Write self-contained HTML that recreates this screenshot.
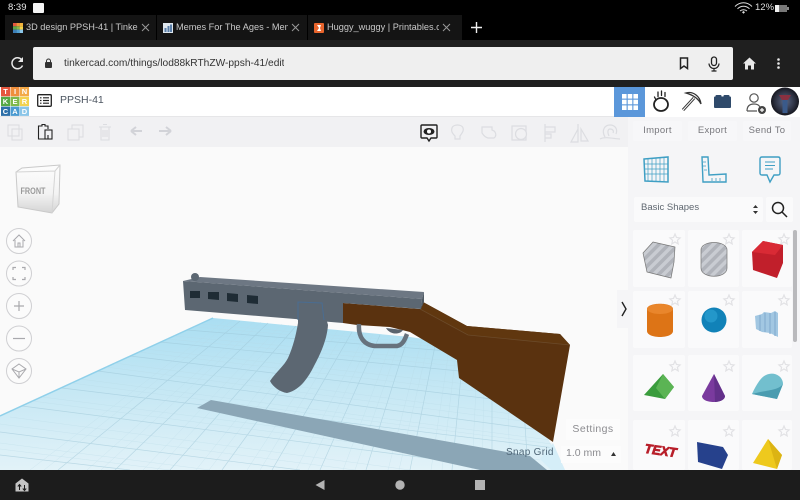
<!DOCTYPE html>
<html><head><meta charset="utf-8">
<style>
html,body{margin:0;padding:0;width:800px;height:500px;overflow:hidden;background:#000}
body{position:relative;font-family:"Liberation Sans",sans-serif}
.a{position:absolute}
.t{position:absolute;white-space:nowrap;overflow:hidden}
.tab{position:absolute;top:15px;height:25px;background:#141414}
.btn{position:absolute;top:121px;height:20px;background:#f7f7f9;color:#77777c;font-size:9.5px;letter-spacing:.3px;text-align:center;line-height:20px;border-radius:2px}
.tile{position:absolute;background:#fafafb;border-radius:2px}
</style></head><body>

<div class="a" style="left:0;top:0;width:800px;height:40px;background:#000"></div>
<div class="t" style="left:8px;top:2px;font-size:9.5px;line-height:12px;color:#e8e8e8">8:39</div>
<div class="a" style="left:33px;top:3px;width:11px;height:10px;background:#f4f4f4;border-radius:1px"></div>

<svg class="a" style="left:734px;top:2px" width="66" height="13" viewBox="0 0 66 13">
<path d="M1 4.500C6-.5 13-.5 18 4.500M3.500 6.800C7 3.400 12 3.400 15.500 6.800M6 9C8 7.400 11 7.400 13 9" stroke="#ddd" stroke-width="1" fill="none"/><path d="M8 10.200L9.500 9L11 10.200L9.500 11.700Z" fill="#ddd"/>
<rect x="41" y="3" width="12" height="7" fill="#777"/><rect x="41" y="3" width="4" height="7" fill="#eee"/><rect x="53" y="5" width="2" height="3" fill="#888"/>
</svg>
<div class="t" style="left:755px;top:2px;font-size:9.5px;line-height:12px;color:#ddd">12%</div>

<div class="tab" style="left:5px;width:151px"></div>
<div class="tab" style="left:157px;width:150px"></div>
<div class="tab" style="left:308px;width:154px"></div>

<svg class="a" style="left:13px;top:23px" width="10" height="10"><rect width="3.300" height="3.300" fill="#e5573f"/><rect x="3.300" width="3.300" height="3.300" fill="#f0923b"/><rect x="6.600" width="3.400" height="3.300" fill="#f3b33d"/><rect y="3.300" width="3.300" height="3.300" fill="#5da84a"/><rect x="3.300" y="3.300" width="3.300" height="3.300" fill="#86b84a"/><rect x="6.600" y="3.300" width="3.400" height="3.300" fill="#f2d14a"/><rect y="6.600" width="3.300" height="3.400" fill="#3d7fb8"/><rect x="3.300" y="6.600" width="3.300" height="3.400" fill="#4f9ed1"/><rect x="6.600" y="6.600" width="3.400" height="3.400" fill="#8cc6e8"/></svg>
<div class="t" style="left:26px;top:21px;width:112px;font-size:9.2px;line-height:13px;color:#c9c9c9">3D design PPSH-41 | Tinkercad</div>
<svg class="a" style="left:141px;top:23px" width="9" height="9"><path d="M1 1L8 8M8 1L1 8" stroke="#999" stroke-width="1"/></svg>

<svg class="a" style="left:163px;top:23px" width="10" height="10"><rect width="10" height="10" fill="#dfe7ee"/><rect x="1.500" y="5" width="2" height="4" fill="#5a7ea8"/><rect x="4.500" y="3" width="2" height="6" fill="#5a7ea8"/><rect x="7" y="1.500" width="2" height="7.500" fill="#5a7ea8"/></svg>
<div class="t" style="left:176px;top:21px;width:112px;font-size:9.2px;line-height:13px;color:#c9c9c9">Memes For The Ages - Memes</div>
<svg class="a" style="left:291px;top:23px" width="9" height="9"><path d="M1 1L8 8M8 1L1 8" stroke="#999" stroke-width="1"/></svg>

<svg class="a" style="left:314px;top:23px" width="10" height="10"><rect width="10" height="10" rx="1" fill="#e8642c"/><path d="M3 2H7L6 5L7 8H3L5 5Z" fill="#fff"/></svg>
<div class="t" style="left:327px;top:21px;width:112px;font-size:9.2px;line-height:13px;color:#c9c9c9">Huggy_wuggy | Printables.com</div>
<svg class="a" style="left:442px;top:23px" width="9" height="9"><path d="M1 1L8 8M8 1L1 8" stroke="#999" stroke-width="1"/></svg>
<svg class="a" style="left:471px;top:22px" width="11" height="11"><path d="M5.500 0V11M0 5.500H11" stroke="#eee" stroke-width="1.400"/></svg>

<div class="a" style="left:0;top:40px;width:800px;height:47px;background:#1f1f1f"></div>
<svg class="a" style="left:10px;top:56px" width="15" height="15" viewBox="0 0 15 15"><path d="M12.500 9.500A5.500 5.500 0 1 1 11.500 3.500" stroke="#e8e8e8" stroke-width="1.500" fill="none"/><path d="M13 1V6H8Z" fill="#e8e8e8"/></svg>
<div class="a" style="left:33px;top:47px;width:700px;height:33px;background:#efefef;border-radius:2px"></div>
<svg class="a" style="left:44px;top:58px" width="9" height="11"><rect x="1" y="4" width="7" height="6" rx="1" fill="#333"/><path d="M2.500 4.500V3A2 2 0 0 1 6.500 3V4.500" stroke="#333" fill="none"/></svg>
<div class="t" style="left:64px;top:57px;font-size:10.2px;line-height:14px;color:#333">tinkercad.com/things/lod88kRThZW-ppsh-41/edit</div>
<svg class="a" style="left:679px;top:57px" width="10" height="13"><path d="M1.500 1H8.500V11.500L5 9L1.500 11.500Z" fill="none" stroke="#222" stroke-width="1.500"/></svg>
<svg class="a" style="left:708px;top:56px" width="12" height="16"><rect x="3.500" y="1" width="5" height="8.500" rx="2.500" fill="none" stroke="#222" stroke-width="1.300"/><path d="M1 7.500A5 5 0 0 0 11 7.500M6 12.500V15M3.500 15H8.500" fill="none" stroke="#222" stroke-width="1.200"/></svg>
<svg class="a" style="left:743px;top:57px" width="13" height="13"><path d="M6.500 0.500L13 6.500H11V12.500H8V8.500H5V12.500H2V6.500H0Z" fill="#e8e8e8"/></svg>
<svg class="a" style="left:776px;top:58px" width="5" height="12"><circle cx="2.500" cy="1.500" r="1.300" fill="#e8e8e8"/><circle cx="2.500" cy="5.500" r="1.300" fill="#e8e8e8"/><circle cx="2.500" cy="9.500" r="1.300" fill="#e8e8e8"/></svg>

<div class="a" style="left:0;top:87px;width:800px;height:30px;background:#fff"></div>
<div class="a" style="left:0;top:116px;width:628px;height:1px;background:#e6e6e8"></div>
<svg class="a" style="left:1px;top:87px" width="28" height="29" font-family="Liberation Sans" font-size="7.500" font-weight="bold" fill="#fff" text-anchor="middle">
<rect x="0" y="0" width="9" height="9.300" fill="#e5573f"/><rect x="9.500" y="0" width="9" height="9.300" fill="#ef8f3d"/><rect x="19" y="0" width="9" height="9.300" fill="#f3a948"/>
<rect x="0" y="9.800" width="9" height="9.300" fill="#57a845"/><rect x="9.500" y="9.800" width="9" height="9.300" fill="#7fb84a"/><rect x="19" y="9.800" width="9" height="9.300" fill="#f2d24f"/>
<rect x="0" y="19.600" width="9" height="9.300" fill="#2d6fa8"/><rect x="9.500" y="19.600" width="9" height="9.300" fill="#4b9ad0"/><rect x="19" y="19.600" width="9" height="9.300" fill="#8ac5e8"/>
<text x="4.500" y="7.200">T</text><text x="14" y="7.200">I</text><text x="23.500" y="7.200">N</text>
<text x="4.500" y="17">K</text><text x="14" y="17">E</text><text x="23.500" y="17">R</text>
<text x="4.500" y="26.800">C</text><text x="14" y="26.800">A</text><text x="23.500" y="26.800">D</text></svg>
<svg class="a" style="left:37px;top:94px" width="15" height="13"><rect x=".7" y=".7" width="13.600" height="11.600" rx="1" fill="none" stroke="#222" stroke-width="1.300"/><path d="M3 3.800H4.500M6 3.800H12M3 6.500H4.500M6 6.500H12M3 9.200H4.500M6 9.200H12" stroke="#222" stroke-width="1.200"/></svg>
<div class="t" style="left:60px;top:93px;font-size:10.5px;line-height:14px;color:#4c5560">PPSH-41</div>

<div class="a" style="left:614px;top:87px;width:31px;height:30px;background:#5b97da"></div>
<svg class="a" style="left:622px;top:94px" width="16" height="16" fill="#fff"><rect width="4.600" height="4.600"/><rect x="5.700" width="4.600" height="4.600"/><rect x="11.400" width="4.600" height="4.600"/><rect y="5.700" width="4.600" height="4.600"/><rect x="5.700" y="5.700" width="4.600" height="4.600"/><rect x="11.400" y="5.700" width="4.600" height="4.600"/><rect y="11.400" width="4.600" height="4.600"/><rect x="5.700" y="11.400" width="4.600" height="4.600"/><rect x="11.400" y="11.400" width="4.600" height="4.600"/></svg>
<svg class="a" style="left:651px;top:89px" width="20" height="24" fill="none" stroke="#222"><ellipse cx="10" cy="15.500" rx="7" ry="6.500" stroke-width="1.800"/><path d="M3.500 8L5 11M7 3V7.500M10.500 2V6.500M14 3.500V7.500" stroke-width="1.300" stroke-linecap="round"/></svg>
<svg class="a" style="left:681px;top:90px" width="22" height="22" fill="none" stroke="#333"><path d="M2 20L13 8" stroke-width="3"/><path d="M2 20L13 8" stroke="#fff" stroke-width="1"/><path d="M5 3C12 1 19 6 20 14C17 8 12 5 5 3Z" stroke-width="1.300"/></svg>
<svg class="a" style="left:714px;top:94px" width="17" height="14" fill="#2f4a6b"><rect y="2.500" width="17" height="11.500" rx="1"/><rect x="1.500" y="1" width="6" height="4" rx="1"/><rect x="9.500" y="1" width="6" height="4" rx="1"/></svg>
<svg class="a" style="left:746px;top:92px" width="22" height="23" fill="none" stroke="#555" stroke-width="1.200"><circle cx="8" cy="6" r="4.200"/><path d="M1 19C1 14 4 12 8 12C11 12 13 13 14 15M1 19H11"/><circle cx="16" cy="18" r="4" fill="#444" stroke="none"/><path d="M16 16V20M14 18H18" stroke="#fff"/></svg>
<svg class="a" style="left:771px;top:87px" width="29" height="29"><defs><radialGradient id="av" cx=".5" cy=".5" r=".55"><stop offset="0" stop-color="#5d6a88"/><stop offset=".65" stop-color="#2c3040"/><stop offset="1" stop-color="#0d0d12"/></radialGradient></defs><circle cx="14" cy="14.500" r="14" fill="url(#av)"/><path d="M8 8L20 8L17 13L11 13Z" fill="#8a3040"/><rect x="11.500" y="13" width="5" height="13" fill="#3a5a8a"/></svg>

<div class="a" style="left:0;top:117px;width:628px;height:30px;background:#f1f1f3"></div>
<div class="a" style="left:628px;top:117px;width:172px;height:30px;background:#f5f5f7"></div>
<svg class="a" style="left:6px;top:122px" width="170" height="20" fill="none" stroke="#dcdde1" stroke-width="1.100">
<rect x="2" y="3" width="11" height="11"/><rect x="6" y="7" width="10" height="11"/>
<path d="M35 4H32.500V17H42V13" stroke="#222"/><path d="M35 4H36V2.500H39V4H42V7" stroke="#222"/><rect x="39" y="8" width="7" height="9" stroke="#222"/>
<rect x="66" y="3" width="11" height="12" /><rect x="62" y="7" width="11" height="11" fill="#f1f1f3"/>
<path d="M93 5H105M95 5V18H103V5M97 2.500H101M97 8V15M99 8V15M101 8V15"/>
<path d="M125 9H136M125 9L130 5M125 9L130 13" stroke="#d2d3d8" stroke-width="2"/>
<path d="M165 9H153M165 9L160 5M165 9L160 13" stroke="#d2d3d8" stroke-width="2"/>
</svg>
<svg class="a" style="left:419px;top:123px" width="20" height="20" fill="none"><path d="M3 2H17Q18 2 18 3V14Q18 15 17 15H12L10 18L8 15H3Q2 15 2 14V3Q2 2 3 2Z" stroke="#222" stroke-width="1.400"/><ellipse cx="10" cy="8.500" rx="5.500" ry="3.500" fill="#222"/><circle cx="10" cy="8.500" r="2" fill="#fff"/></svg>
<svg class="a" style="left:450px;top:122px" width="170" height="22" fill="none" stroke="#dcdde1" stroke-width="1.200">
<path d="M5 14C2 11 1 9 2 6C3 2 12 2 13 6C14 9 12 11 10 14V17H5Z"/>
<path d="M32 5H42V8C46 9 47 14 44 16H38C34 15 33 12 32 11Z"/>
<rect x="62" y="4" width="14" height="14"/><circle cx="71" cy="12" r="5.500" fill="#f1f1f3"/>
<path d="M95 2V20M95 5H105V10H95M95 12H101V16H95"/>
<path d="M128 2V20H121L128 7M131 7L138 19H131Z"/>
<path d="M155 15C151 8 155 3 160 3C165 3 168 7 166 12M159 14C157 10 158 7 160 7C163 7 164 9 163 11M150 17C155 14 165 17 170 17"/>
</svg>

<div class="btn" style="left:633px;width:49px">Import</div>
<div class="btn" style="left:688px;width:49px">Export</div>
<div class="btn" style="left:743px;width:48px">Send To</div>

<div class="a" style="left:0;top:147px;width:628px;height:323px;background:#fafafa"></div>

<svg class="a" style="left:0;top:147px" width="628" height="323" viewBox="0 147 628 323">
<defs>
<linearGradient id="wp" x1="0" y1="318" x2="0" y2="470" gradientUnits="userSpaceOnUse"><stop offset="0" stop-color="#aadef2"/><stop offset=".45" stop-color="#c4e7f4"/><stop offset="1" stop-color="#e2f2f8"/></linearGradient>
<linearGradient id="cube" x1="0" y1="0" x2="0" y2="1"><stop offset="0" stop-color="#fdfdfd"/><stop offset=".6" stop-color="#f3f3f3"/><stop offset="1" stop-color="#d4d4d4"/></linearGradient>
</defs>
<polygon points="213,318 410,337 500,350 565,470 0,470 0,416" fill="url(#wp)"/>
<path d="M213,318L0,416" stroke="#8fd0ea" stroke-width="1.500"/>
<g stroke="#9cc5d6" stroke-width=".7" fill="none" opacity=".55">
<path d="M240,321L58,470M268,323L115,470M296,326L170,470M324,329L222,470M352,332L272,470M380,335L320,470M408,337L366,470M436,341L410,470M464,345L452,470M492,349L492,470M522,380L528,470"/>
<path d="M187,330L460,352M160,342L470,372M130,356L500,400M98,371L540,430M62,388L555,448M22,406L520,470M0,432L300,470M0,455L130,470"/>
</g>
<g stroke="#b6d8e5" stroke-width=".4" fill="none" opacity=".55">
<path d="M226,320L30,470M254,322L87,470M282,324L143,470M310,327L196,470M338,330L247,470M366,333L296,470M394,336L343,470M422,339L388,470M450,343L431,470M478,347L472,470M506,351L510,470M233,320L44,470M261,322L101,470M289,325L157,470M317,328L209,470M345,331L260,470M373,334L308,470M401,337L355,470M429,340L399,470M457,344L442,470M485,348L482,470"/>
<path d="M200,324L450,345M174,336L465,362M145,349L485,386M114,363L520,415M80,379L550,440M42,397L540,460M10,417L410,470M0,443L210,470M194,327L455,348M167,339L468,367M138,352L492,393M106,367L530,422M71,383L552,444M32,401L530,465M0,424L355,470M0,449L170,470"/>
</g>
<polygon points="197,408 211,400 530,456 547,470 480,470" fill="#8ba6b6"/>
<polygon points="540,459 553,443 565,470 551,470" fill="#d5eef8"/>

<polygon points="343,303 420,309 423,302 467,326 560,334 570,345 553,442 459,378 457,360 410,332 390,327 357,325 343,323" fill="#5a320f"/>
<polygon points="423,302 467,326 560,334 570,345 468,335 420,309" fill="#60370f"/>
<path d="M420,309L468,335L570,345" stroke="#6b4a2a" stroke-width=".8" fill="none"/>
<path d="M359,324C358,337 364,345 375,346L397,346C403,345 405,339 407,334" fill="none" stroke="#67727d" stroke-width="4.500"/>
<path d="M386,328C390,335 400,335 403,330Z" fill="#59636e"/>
<polygon points="183,281 200,277 424,292 422,299" fill="#6d7783"/>
<polygon points="183,281 422,299 421,309 343,303 343,323 295,319 185,310" fill="#5c6772"/>
<polygon points="422,299 424,292 424,302 421,309" fill="#4f5a64"/>
<circle cx="195" cy="277" r="4" fill="#5c6772"/>
<g fill="#1f2c35"><polygon points="190,291 200,291 200,298 190,298"/><polygon points="208,292 219,292 219,300 208,299"/><polygon points="227,293 238,294 238,302 227,301"/><polygon points="247,295 258,296 258,304 247,303"/></g>
<path d="M298,302L322,303L328,325C327,340 320,355 314,366C308,378 300,390 287,393C280,392 273,387 270,381C276,372 284,366 288,358C293,347 296,335 298,323Z" fill="#5c6772"/>
<path d="M298,320V302L322,303L324,320" fill="none" stroke="#4a6d92" stroke-width="1"/>

<polygon points="16,172 22,168 60,165 59,204 52,213 18,207" fill="url(#cube)" stroke="#c9c9c9"/>
<path d="M16,172L55,171L52,213M55,171L60,165" fill="none" stroke="#d4d4d4"/>
<text x="33" y="194" font-family="Liberation Sans" font-size="9" font-weight="bold" fill="#9a9a9a" text-anchor="middle" textLength="25" lengthAdjust="spacingAndGlyphs">FRONT</text>

<g fill="#fbfbfb" stroke="#cfcfd2" stroke-width="1"><circle cx="19" cy="241" r="12.500"/><circle cx="19" cy="273.500" r="12.500"/><circle cx="19" cy="306" r="12.500"/><circle cx="19" cy="338.500" r="12.500"/><circle cx="19" cy="371" r="12.500"/></g>
<g fill="none" stroke="#a9a9ad" stroke-width="1"><path d="M13,241L19,235L25,241M15,240V247H23V240M18,247V243H20V247"/>
<path d="M13,270V267.500H16M22,267.500H25V270M25,277V279.500H22M16,279.500H13V277" stroke-width="1.200"/>
<path d="M19,301V311M14,306H24" stroke-width="1.200"/><path d="M13,338.500H25" stroke-width="1.200"/>
<path d="M19,364L26,369L19,378L12,369ZM12,369L19,372L26,369M19,372V378"/></g>
</svg>

<div class="a" style="left:628px;top:147px;width:172px;height:323px;background:#f5f5f7"></div>
<div class="a" style="left:617px;top:290px;width:11px;height:38px;background:#f5f5f7"></div>
<svg class="a" style="left:620px;top:301px" width="8" height="16"><path d="M2 1L6 8L2 15" stroke="#222" stroke-width="1.400" fill="none"/></svg>
<div class="t" style="left:566px;top:419px;width:54px;height:21px;background:#fcfcfc;font-size:10.500px;letter-spacing:.4px;line-height:20px;color:#8c8c90;text-align:center">Settings</div>
<div class="t" style="left:506px;top:446px;font-size:10px;letter-spacing:.3px;line-height:13px;color:#4f6677">Snap Grid</div>
<div class="t" style="left:561px;top:446px;width:60px;height:17px;background:#fcfcfc;font-size:10.500px;line-height:15px;color:#8c8c90;text-indent:5px">1.0 mm</div>
<svg class="a" style="left:611px;top:452px" width="5" height="4"><path d="M0 4L2.500 0L5 4Z" fill="#333"/></svg>

<svg class="a" style="left:643px;top:156px" width="30" height="28" fill="none" stroke="#3f9fc4"><path d="M1 3L25 1V26L2 25Z" stroke-width="1.500"/><path d="M5 3V25M9 2.500V25M13 2V25.500M17 2V25.500M21 1.500V26M1.300 8H25M1.500 13H25M1.700 18H25" stroke-width=".7"/></svg>
<svg class="a" style="left:700px;top:156px" width="28" height="28" fill="none" stroke="#3f9fc4" stroke-width="1.400"><path d="M2 1L8 1L9 19L26 18V26L3 26Z"/><path d="M3 6H6M3 10H6M4 14H7M12 22V25M16 22V25M20 22V25" stroke-width=".8"/></svg>
<svg class="a" style="left:759px;top:156px" width="22" height="28" fill="none" stroke="#3f9fc4" stroke-width="1.400"><path d="M3 1H19Q21 1 21 3V17Q21 19 19 19H15L11 26L8 19H3Q1 19 1 17V3Q1 1 3 1Z"/><path d="M6 6H16M6 9.500H16M6 13H14" stroke-width="1"/></svg>

<div class="a" style="left:634px;top:197px;width:129px;height:25px;background:#fafafb;border-radius:2px"></div>
<div class="t" style="left:641px;top:201px;font-size:9.500px;line-height:14px;color:#5f6770">Basic Shapes</div>
<svg class="a" style="left:752px;top:204px" width="7" height="11" fill="#333"><path d="M3.500 1L6 4H1ZM3.500 10L1 7H6Z"/></svg>
<div class="a" style="left:766px;top:197px;width:27px;height:25px;background:#fafafb;border-radius:2px"></div>
<svg class="a" style="left:771px;top:201px" width="17" height="17" fill="none" stroke="#222" stroke-width="1.500"><circle cx="7" cy="7" r="5.500"/><path d="M11 11L16 16"/></svg>

<div class="tile" style="left:633px;top:230px;width:52px;height:57px"></div>
<div class="tile" style="left:688px;top:230px;width:51px;height:57px"></div>
<div class="tile" style="left:742px;top:230px;width:50px;height:57px"></div>
<div class="tile" style="left:633px;top:291px;width:52px;height:57px"></div>
<div class="tile" style="left:688px;top:291px;width:51px;height:57px"></div>
<div class="tile" style="left:742px;top:291px;width:50px;height:57px"></div>
<div class="tile" style="left:633px;top:355px;width:52px;height:56px"></div>
<div class="tile" style="left:688px;top:355px;width:51px;height:56px"></div>
<div class="tile" style="left:742px;top:355px;width:50px;height:56px"></div>
<div class="tile" style="left:633px;top:420px;width:52px;height:50px"></div>
<div class="tile" style="left:688px;top:420px;width:51px;height:50px"></div>
<div class="tile" style="left:742px;top:420px;width:50px;height:50px"></div>
<div class="a" style="left:793px;top:230px;width:4px;height:112px;background:#b9b9bc;border-radius:2px"></div>

<svg class="a" style="left:628px;top:225px" width="172" height="245" viewBox="628 225 172 245">
<defs>
<pattern id="st" width="7" height="7" patternUnits="userSpaceOnUse" patternTransform="rotate(45)"><rect width="7" height="7" fill="#c9ccd2"/><rect width="3.500" height="7" fill="#b0b3ba"/></pattern>
</defs>
<g fill="none" stroke="#e2e2e5" stroke-width="1.200">
<path d="M675 234l1.500 3.500 3.600.4-2.700 2.400.8 3.600-3.200-1.900-3.200 1.900.8-3.600-2.700-2.400 3.600-.4z"/>
<path d="M729 234l1.500 3.500 3.600.4-2.700 2.400.8 3.600-3.200-1.900-3.200 1.900.8-3.600-2.700-2.400 3.600-.4z"/>
<path d="M784 234l1.500 3.500 3.600.4-2.700 2.400.8 3.600-3.200-1.900-3.200 1.900.8-3.600-2.700-2.400 3.600-.4z"/>
<path d="M675 295l1.500 3.500 3.600.4-2.700 2.400.8 3.600-3.200-1.900-3.200 1.900.8-3.600-2.700-2.400 3.600-.4z"/>
<path d="M729 295l1.500 3.500 3.600.4-2.700 2.400.8 3.600-3.200-1.900-3.200 1.900.8-3.600-2.700-2.400 3.600-.4z"/>
<path d="M784 295l1.500 3.500 3.600.4-2.700 2.400.8 3.600-3.200-1.900-3.200 1.900.8-3.600-2.700-2.400 3.600-.4z"/>
<path d="M675 361l1.500 3.500 3.600.4-2.700 2.400.8 3.600-3.200-1.900-3.200 1.900.8-3.600-2.700-2.400 3.600-.4z"/>
<path d="M729 361l1.500 3.500 3.600.4-2.700 2.400.8 3.600-3.200-1.900-3.200 1.900.8-3.600-2.700-2.400 3.600-.4z"/>
<path d="M784 361l1.500 3.500 3.600.4-2.700 2.400.8 3.600-3.200-1.900-3.200 1.900.8-3.600-2.700-2.400 3.600-.4z"/>
<path d="M675 426l1.500 3.500 3.600.4-2.700 2.400.8 3.600-3.200-1.900-3.200 1.900.8-3.600-2.700-2.400 3.600-.4z"/>
<path d="M729 426l1.500 3.500 3.600.4-2.700 2.400.8 3.600-3.200-1.900-3.200 1.900.8-3.600-2.700-2.400 3.600-.4z"/>
<path d="M784 426l1.500 3.500 3.600.4-2.700 2.400.8 3.600-3.200-1.900-3.200 1.900.8-3.600-2.700-2.400 3.600-.4z"/>
</g>
<path d="M643 253L653 242L675 247L674 262L671 278L647 272Z" fill="url(#st)" stroke="#777" stroke-width=".7" stroke-linejoin="round"/>
<path d="M701 250C701 240 727 240 727 250V268C727 279 701 279 701 268Z" fill="url(#st)" stroke="#777" stroke-width=".7"/>
<path d="M752 252L763 241L783 245L783 263L777 278L753 270Z" fill="#c11f2b"/>
<path d="M752 252L763 241L783 245L775 255Z" fill="#d92a35"/>
<path d="M647 309C647 302 673 302 673 309V331C673 339 647 339 647 331Z" fill="#dd7416"/>
<ellipse cx="660" cy="309" rx="13" ry="5" fill="#e9862c"/>
<circle cx="714" cy="320" r="12.500" fill="#1182b8"/>
<circle cx="711" cy="316" r="6.500" fill="#2b9fd2" opacity=".7"/>
<path d="M755 316L762 314L764 312L771 313L775 311L778 313L778 337L770 333L762 332L756 329Z" fill="#a2c7e2"/>
<path d="M760 315V331M765 313V332M770 313V334M775 312V336" stroke="#86aed0" stroke-width="1.200"/>
<polygon points="644,395 663,374 674,387 665,399" fill="#3a9c3d"/>
<polygon points="663,374 674,387 665,399 656,388" fill="#5bb454"/>
<path d="M714,374L725,396C725,404 702,404 702,396Z" fill="#7a3a9e"/>
<path d="M714,374L725,396C725,400 719,402 715,402Z" fill="#63308a"/>
<path d="M752,394C756,385 761,377 766,375C774,371 783,376 783,384L777,399Z" fill="#72bfce"/>
<path d="M752,394L777,399L783,384C778,391 765,390 752,394Z" fill="#4a9cb0"/>
<text x="660" y="455" font-family="Liberation Sans" font-size="13" font-weight="bold" font-style="italic" fill="#b81f2a" stroke="#b81f2a" stroke-width=".8" text-anchor="middle" transform="rotate(8 660 455)" textLength="32" lengthAdjust="spacingAndGlyphs">TEXT</text>
<polygon points="697,442 723,447 728,455 722,469 698,462" fill="#26418c"/>
<polygon points="768,439 782,455 777,469 753,463" fill="#eec91d"/>
<polygon points="768,439 782,455 777,469" fill="#dcb414"/>
</svg>

<div class="a" style="left:0;top:470px;width:800px;height:30px;background:#1c1c1c"></div>
<svg class="a" style="left:15px;top:478px" width="14" height="14"><path d="M7 .5L13.500 5.500V13.500H.5V5.500Z" fill="#c4c4c4"/><path d="M4.500 12V7M2.800 8.500L4.500 6.500L6.200 8.500M9.500 12V7M7.800 10.500L9.500 12.500L11.200 10.500" stroke="#1c1c1c" stroke-width="1" fill="none"/></svg>
<svg class="a" style="left:315px;top:480px" width="10" height="10"><path d="M9.500 0V10L0.500 5Z" fill="#b3b3b3"/></svg>
<svg class="a" style="left:395px;top:480px" width="10" height="10"><circle cx="5" cy="5" r="4.700" fill="#b3b3b3"/></svg>
<div class="a" style="left:475px;top:480px;width:10px;height:10px;background:#b3b3b3"></div>

</body></html>
